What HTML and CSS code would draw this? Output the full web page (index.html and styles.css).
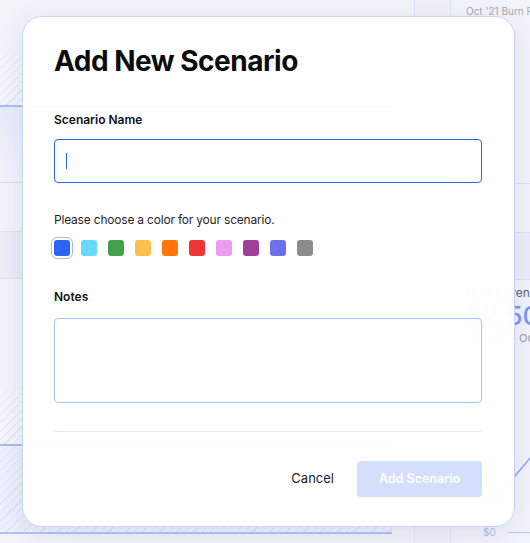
FILE: index.html
```html
<!DOCTYPE html>
<html lang="en">
<head>
<meta charset="utf-8">
<title>Add New Scenario</title>
<link rel="stylesheet" href="styles.css">
</head>
<body>
<div class="dash">
  <div class="dash-left">
    <div class="dl-top"></div>
    <div class="hatch h1"></div>
    <div class="area a1"></div>
    <div class="row"></div>
    <div class="row band"></div>
    <div class="plain"></div>
    <div class="hatch h2"></div>
    <div class="hatch a2"></div>
  </div>
  <div class="dash-mid"></div>
  <div class="dash-right">
    <div class="kpi">Oct '21 Burn Rate</div>
    <div class="rr"></div>
    <div class="rr rr2"></div>
    <div class="kpi2">
      <div class="k-title">New Revenue</div>
      <div class="k-value">$2,500</div>
      <div class="k-sub">Sep '21 - Oct '21</div>
    </div>
    <svg class="chart" width="79" height="180" viewBox="0 0 79 180">
      <polyline points="40,160 64,131 90,100" fill="none" stroke="#8ea6f2" stroke-width="1.5"/>
    </svg>
    <div class="axis"><span>$0</span><i class="axis-line"></i></div>
  </div>
</div>

<div class="modal">
  <h1 class="title">Add New Scenario</h1>
  <div class="label label-name">Scenario Name</div>
  <div class="input"><span class="caret"></span></div>
  <p class="hint">Please choose a color for your scenario.</p>
  <div class="swatches">
    <span class="sw sel c-blue"></span>
    <span class="sw c-cyan"></span>
    <span class="sw c-green"></span>
    <span class="sw c-yellow"></span>
    <span class="sw c-orange"></span>
    <span class="sw c-red"></span>
    <span class="sw c-pink"></span>
    <span class="sw c-purple"></span>
    <span class="sw c-indigo"></span>
    <span class="sw c-gray"></span>
  </div>
  <div class="label label-notes">Notes</div>
  <div class="textarea"></div>
  <div class="divider"></div>
  <div class="footer">
    <button class="cancel" type="button">Cancel</button>
    <button class="primary" type="button">Add Scenario</button>
  </div>
</div>
</body>
</html>
```
FILE: styles.css
```css
* { box-sizing: border-box; margin: 0; padding: 0; }
html, body { width: 530px; height: 543px; overflow: hidden; }
body {
  font-family: Inter, "Noto Sans", sans-serif;
  background: #f3f4fa;
  position: relative;
}

/* background dashboard */
.dash {
  display: grid;
  grid-template-columns: 414px 37px 79px;
  height: 543px;
}
.dash-left { display: flex; flex-direction: column; }
.dl-top { height: 53px; }
.hatch {
  width: 392px;
  background: repeating-linear-gradient(135deg, #f5f6fb 0 5px, #e3e6f1 5px 6px);
}
.h1 { height: 54px; border-bottom: 2px solid #a9bcf3; }
.a1 {
  width: 392px;
  height: 76px;
  background: linear-gradient(#e8ecfa, #f2f4fc);
  border-bottom: 1px solid #d9dff3;
}
.row { height: 49px; border-bottom: 1px solid #dde2f3; }
.band { height: 47px; background: #eceef7; }
.plain { height: 111px; }
.h2 { height: 56px; border-bottom: 2px solid #a9bcf3; }
.a2 {
  height: 88px;
  background: repeating-linear-gradient(135deg, #eef1fb 0 5px, #dfe4f4 5px 6px);
  border-bottom: 2px solid #b3c4f5;
}
.dash-mid {
  border-left: 1px solid #dfe3f2;
  border-right: 1px solid #dfe3f2;
  background: #f0f2fa;
}
.dash-right {
  display: flex;
  flex-direction: column;
  overflow: hidden;
  white-space: nowrap;
}
.kpi {
  height: 184px;
  flex: none;
  border-bottom: 1px solid #dde2f3;
  padding: 5px 0 0 15px;
  font-size: 10px;
  line-height: 12px;
  color: #a4a8b6;
}
.rr { height: 49px; flex: none; border-bottom: 1px solid #dde2f3; }
.rr2 { height: 47px; background: #eceef7; }
.kpi2 { padding: 5px 0 0 15px; flex: none; }
.k-title { font-size: 12px; line-height: 16px; color: #5f6270; }
.k-value { font-size: 26px; line-height: 30px; color: #7c96f0; font-weight: 500; }
.k-sub { font-size: 11px; line-height: 14px; color: #9a9daa; padding-left: 4px; }
.chart { display: block; flex: none; }
.axis {
  display: flex;
  align-items: center;
  height: 14px;
  padding-left: 32px;
  font-size: 10px;
  color: #aebbe6;
}
.axis-line { flex: 1; margin-left: 12px; border-top: 1px solid #b9c7f3; }

/* modal */
.modal {
  position: absolute;
  left: 22px;
  top: 16px;
  width: 493px;
  height: 511px;
  background: rgba(255, 255, 255, 0.97);
  border: 1px solid #c6d3fa;
  border-radius: 20px;
  box-shadow: 0 6px 28px rgba(50, 70, 140, 0.12);
  padding: 27px 32px 28px 31px;
  display: flex;
  flex-direction: column;
}
.title {
  font-size: 28px;
  line-height: 34px;
  font-weight: 700;
  letter-spacing: -0.5px;
  color: #0b0b0c;
}
.label {
  font-size: 12px;
  line-height: 16px;
  font-weight: 600;
  color: #111114;
}
.label-name { margin-top: 34px; }
.input {
  margin-top: 11px;
  height: 44px;
  border: 1px solid #2d62ea;
  border-radius: 4px;
  padding-left: 11px;
  display: flex;
  align-items: center;
}
.caret { width: 1px; height: 16px; background: #2d62ea; }
.hint {
  margin-top: 29px;
  font-size: 12px;
  line-height: 16px;
  letter-spacing: -0.2px;
  color: #1f1f22;
}
.swatches { margin-top: 12px; display: flex; gap: 11px; }
.sw { width: 16px; height: 16px; border-radius: 3px; flex: none; }
.sel { outline: 1px solid #a3bbf7; outline-offset: 2px; }
.c-blue { background: #2c63f0; }
.c-cyan { background: #67d9f6; }
.c-green { background: #45a04e; }
.c-yellow { background: #ffbf50; }
.c-orange { background: #ff7806; }
.c-red { background: #ed3535; }
.c-pink { background: #eb9ceb; }
.c-purple { background: #9c4197; }
.c-indigo { background: #6f6fe9; }
.c-gray { background: #8c8c8c; }
.label-notes { margin-top: 33px; }
.textarea {
  margin-top: 13px;
  height: 85px;
  border: 1px solid #a9bff7;
  border-radius: 4px;
}
.divider { margin-top: 28px; height: 1px; background: #e3e9f8; }
.footer {
  margin-top: 29px;
  display: flex;
  justify-content: flex-end;
  align-items: center;
  gap: 23px;
}
button { font-family: inherit; border: none; background: none; cursor: pointer; }
.cancel { font-size: 13px; line-height: 16px; color: #1b1b1f; padding-bottom: 2px; }
.primary {
  width: 125px;
  height: 36px;
  background: #d5dffb;
  color: #ffffff;
  border-radius: 4px;
  font-size: 12.5px;
  font-weight: 600;
  padding-bottom: 1px;
}
```
